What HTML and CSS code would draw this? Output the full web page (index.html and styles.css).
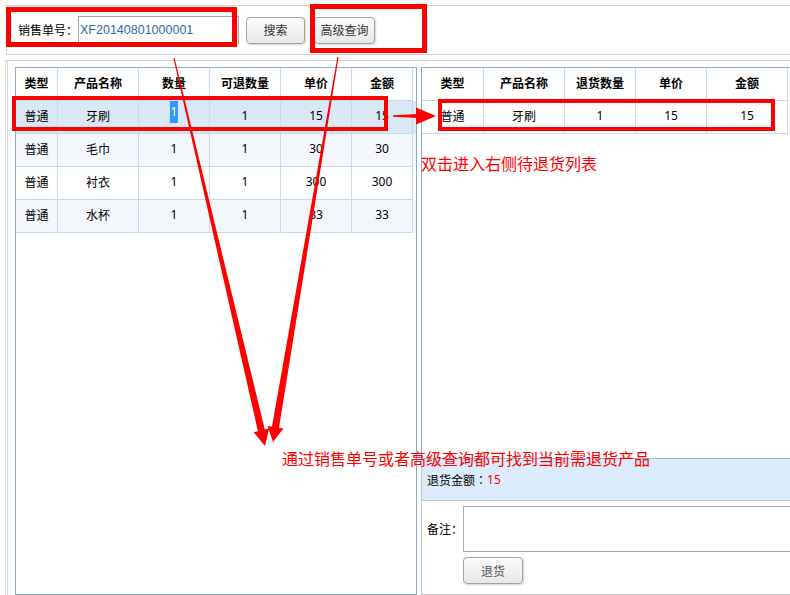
FILE: index.html
```html
<!DOCTYPE html>
<html lang="zh-CN">
<head>
<meta charset="utf-8">
<title>退货</title>
<link rel="stylesheet" href="styles.css">
</head>
<body>
<div class="page">
  <div class="toolbar">
    <label class="lbl">销售单号<span class="colon">：</span></label>
    <input class="ipt" type="text" value="XF20140801000001">
    <button class="btn btn-search">搜索</button>
    <button class="btn btn-adv">高级查询</button>
  </div>
  <div class="main">
    <div class="left-panel">
      <div class="grid grid-left">
        <div class="row head">
          <div class="c">类型</div><div class="c">产品名称</div><div class="c">数量</div><div class="c">可退数量</div><div class="c">单价</div><div class="c">金额</div><div class="fill"></div>
        </div>
        <div class="row sel">
          <div class="c">普通</div><div class="c">牙刷</div><div class="c"><span class="picked">1</span></div><div class="c">1</div><div class="c">15</div><div class="c">15</div><div class="fill"></div>
        </div>
        <div class="row alt">
          <div class="c">普通</div><div class="c">毛巾</div><div class="c">1</div><div class="c">1</div><div class="c">30</div><div class="c">30</div><div class="fill"></div>
        </div>
        <div class="row">
          <div class="c">普通</div><div class="c">衬衣</div><div class="c">1</div><div class="c">1</div><div class="c">300</div><div class="c">300</div><div class="fill"></div>
        </div>
        <div class="row alt">
          <div class="c">普通</div><div class="c">水杯</div><div class="c">1</div><div class="c">1</div><div class="c">33</div><div class="c">33</div><div class="fill"></div>
        </div>
      </div>
    </div>
    <div class="right-panel">
      <div class="grid grid-right">
        <div class="row head">
          <div class="c">类型</div><div class="c">产品名称</div><div class="c">退货数量</div><div class="c">单价</div><div class="c">金额</div><div class="fill"></div>
        </div>
        <div class="row">
          <div class="c">普通</div><div class="c">牙刷</div><div class="c">1</div><div class="c">15</div><div class="c">15</div><div class="fill"></div>
        </div>
      </div>
      <div class="summary">退货金额<span class="colon">：</span><span class="amt">15</span></div>
      <div class="remark">
        <div class="remark-row">
          <span class="rlabel">备注<span class="colon">：</span></span>
          <textarea class="rtext"></textarea>
        </div>
        <button class="btn btn-return">退货</button>
      </div>
    </div>
  </div>

  <div class="anno">
    <div class="rbox rbox-1"></div>
    <div class="rbox rbox-2"></div>
    <div class="rbox rbox-3"></div>
    <div class="rbox rbox-4"></div>
    <div class="note note-1">双击进入右侧待退货列表</div>
    <div class="note note-2">通过销售单号或者高级查询都可找到当前需退货产品</div>
    <svg class="arrows" width="790" height="595" viewBox="0 0 790 595">
      <polygon fill="#ff0000" points="174.6,57.9 264.8,429.6 269.1,428.6 265,446 253.6,432.2 257.9,431.2 173.4,58.1"/>
      <polygon fill="#ff0000" points="338.6,57.1 279,427.8 283.4,428.5 273,442 267.6,425.9 272,426.6 337.4,56.9"/>
      <polygon fill="#ff0000" points="393,115.3 418,114 418,118 393,116.7"/>
      <polygon fill="#ff0000" points="416,107.5 436,116 416,124.5"/>
    </svg>
  </div>
</div>
</body>
</html>
```

FILE: styles.css
```css
html, body {
  margin: 0;
  padding: 0;
  background: #ffffff;
}
body {
  width: 790px;
  height: 595px;
  overflow: hidden;
  font-family: "Noto Sans", "Noto Sans CJK SC", sans-serif;
  font-size: 12px;
  color: #000;
}
.page {
  position: relative;
  width: 790px;
  height: 595px;
  display: flex;
  flex-direction: column;
}
.colon {
  font-family: "Noto Sans CJK TC", "Noto Sans CJK SC", sans-serif;
}

/* toolbar */
.toolbar {
  flex: none;
  margin: 5px 0 0 6px;
  height: 50px;
  box-sizing: border-box;
  border: 1px solid #d3d3d3;
  border-right: none;
  display: flex;
  align-items: center;
  padding-left: 11px;
}
.lbl {
  width: 60px;
  font-size: 12px;
  white-space: nowrap;
}
.ipt {
  margin: 0;
  width: 161px;
  height: 28px;
  box-sizing: border-box;
  border: 1px solid #a9a9a9;
  padding: 0 0 0 1px;
  font-family: "Liberation Sans", sans-serif;
  font-size: 12.5px;
  color: #3366aa;
  outline: none;
}
.btn {
  margin: 0;
  height: 27px;
  box-sizing: border-box;
  border: 1px solid #a3a3a3;
  border-radius: 4px;
  background: linear-gradient(#fbfbfb, #e8e8e8);
  box-shadow: 1px 1px 2px rgba(0, 0, 0, 0.18);
  font-family: "Noto Sans", "Noto Sans CJK SC", sans-serif;
  font-size: 12px;
  color: #333;
  padding: 0;
}
.btn-search { margin-left: 7px; width: 59px; }
.btn-adv { margin-left: 9px; width: 61px; }

/* main area */
.main {
  flex: 1;
  min-height: 0;
  margin: 5px 0 0 5px;
  border-top: 1px solid #d3d3d3;
  border-left: 1px solid #dcdcdc;
  display: flex;
}
.left-panel {
  flex: none;
  margin-left: 1px;
  border-left: 1px solid #dcdcdc;
  padding: 6px 0 0 7px;
  display: flex;
  flex-direction: column;
}
.grid-left {
  flex: 1;
  width: 402px;
  box-sizing: border-box;
  border: 1px solid #8fa9cb;
}
.row {
  display: grid;
  height: 33px;
}
.grid-left .row {
  grid-template-columns: 42px 81px 71px 71px 71px 61px 1fr;
}
.grid-right .row {
  grid-template-columns: 62px 81px 71px 71px 81px 1fr;
}
.c {
  box-sizing: border-box;
  border-right: 1px solid #c6d9ee;
  border-bottom: 1px solid #c6d9ee;
  display: flex;
  align-items: center;
  justify-content: center;
  white-space: nowrap;
  padding-bottom: 3px;
}
.head .c {
  font-weight: bold;
  padding-bottom: 2px;
}
.row.sel {
  background: #d9e8f4;
}
.row.alt {
  background: #f3f7fb;
}
.picked {
  display: inline-block;
  background: #3399ff;
  color: #fff;
  height: 22px;
  line-height: 22px;
  padding: 0 1px;
  margin-bottom: 7px;
}

/* right side */
.right-panel {
  flex: 1;
  min-width: 0;
  margin-left: 4px;
  padding-top: 6px;
  display: flex;
  flex-direction: column;
  overflow: hidden;
}
.grid-right {
  flex: 1;
  min-height: 0;
  border-top: 1px solid #8fa9cb;
  border-left: 1px solid #8fa9cb;
}
.summary {
  flex: none;
  height: 43px;
  box-sizing: border-box;
  border-top: 1px solid #95b8e7;
  border-bottom: 1px solid #c5c5c5;
  border-left: 1px solid #c5c5c5;
  background: #dcebfb;
  padding-left: 5px;
  display: flex;
  align-items: center;
  white-space: nowrap;
}
.amt { color: #ff0000; }
.remark {
  flex: none;
  height: 94px;
  box-sizing: border-box;
  border-left: 1px solid #c5c5c5;
  border-bottom: 1px solid #c5c5c5;
  padding: 5px 0 0 5px;
}
.remark-row {
  display: flex;
  align-items: center;
}
.rlabel {
  flex: none;
  width: 36px;
  white-space: nowrap;
}
.rtext {
  flex: none;
  margin: 0;
  width: 340px;
  height: 46px;
  box-sizing: border-box;
  border: 1px solid #a9a9a9;
  resize: none;
  outline: none;
}
.btn-return {
  display: block;
  margin: 5px 0 0 36px;
  width: 60px;
  color: #555;
}

/* annotations */
.anno {
  position: absolute;
  left: 0;
  top: 0;
  width: 790px;
  height: 595px;
  pointer-events: none;
  z-index: 10;
}
.rbox {
  position: absolute;
  box-sizing: border-box;
  border: 4px solid #ff0000;
}
.rbox-1 { left: 6px; top: 7px; width: 231px; height: 40px; border-width: 5px; }
.rbox-2 { left: 310px; top: 4px; width: 117px; height: 49px; border-width: 5px; }
.rbox-3 { left: 12px; top: 96px; width: 376px; height: 35px; }
.rbox-4 { left: 438px; top: 99px; width: 337px; height: 32px; }
.note {
  position: absolute;
  font-family: "Noto Sans CJK SC", sans-serif;
  font-size: 16px;
  line-height: 16px;
  color: #ff0000;
  white-space: nowrap;
}
.note-1 { left: 421px; top: 155px; }
.note-2 { left: 282px; top: 450px; }
.arrows {
  position: absolute;
  left: 0;
  top: 0;
}
```
